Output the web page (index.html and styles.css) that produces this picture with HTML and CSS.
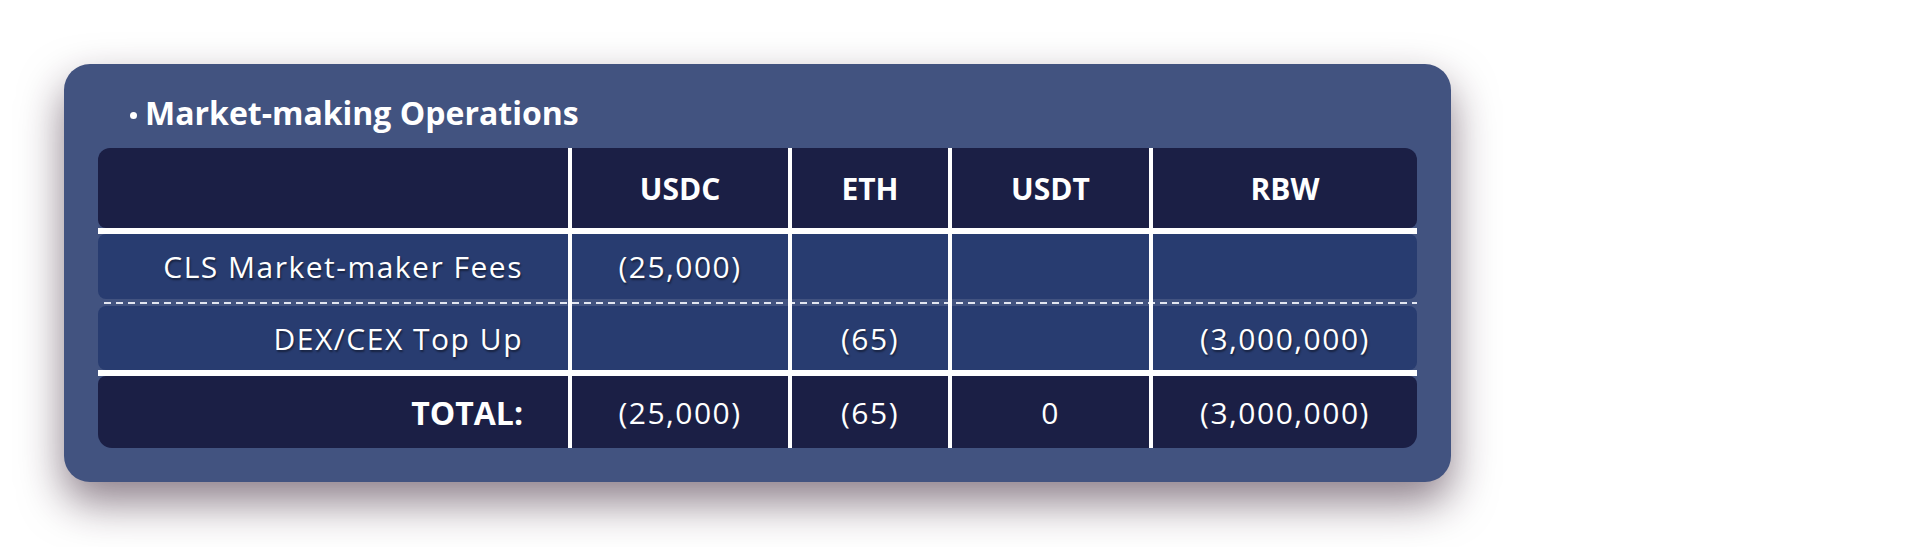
FILE: index.html
```html
<!DOCTYPE html>
<html lang="en">
<head>
<meta charset="utf-8">
<title>Market-making Operations</title>
<link rel="stylesheet" href="styles.css">
</head>
<body>
<main class="page">
  <section class="card">
    <h2 class="title"><span class="dot"></span>Market-making Operations</h2>
    <div class="table">
      <div class="row head">
        <div class="cell label"></div>
        <div class="cell">USDC</div>
        <div class="cell">ETH</div>
        <div class="cell">USDT</div>
        <div class="cell">RBW</div>
      </div>
      <div class="rule"></div>
      <div class="row body first">
        <div class="cell label">CLS Market-maker Fees</div>
        <div class="cell">(25,000)</div>
        <div class="cell"></div>
        <div class="cell"></div>
        <div class="cell"></div>
      </div>
      <div class="row gap">
        <div class="cell label"></div>
        <div class="cell"></div>
        <div class="cell"></div>
        <div class="cell"></div>
        <div class="cell"></div>
      </div>
      <div class="row body second">
        <div class="cell label">DEX/CEX Top Up</div>
        <div class="cell"></div>
        <div class="cell">(65)</div>
        <div class="cell"></div>
        <div class="cell">(3,000,000)</div>
      </div>
      <div class="rule"></div>
      <div class="row total">
        <div class="cell label">TOTAL:</div>
        <div class="cell">(25,000)</div>
        <div class="cell">(65)</div>
        <div class="cell">0</div>
        <div class="cell">(3,000,000)</div>
      </div>
    </div>
  </section>
</main>
</body>
</html>
```

FILE: styles.css
```css
* {
  box-sizing: border-box;
}

html, body {
  margin: 0;
  background: #ffffff;
}

body {
  font-family: "Open Sans", "Liberation Sans", sans-serif;
  color: #ffffff;
}

.page {
  min-height: 547px;
  padding: 64px 0 65px 64px;
}

.card {
  width: 1387px;
  background: #425380;
  border-radius: 26px;
  padding: 29px 34px 34px 34px;
  box-shadow: 0 20px 44px rgba(45, 20, 40, 0.55);
}

.title {
  margin: 0 0 15px 0;
  padding-left: 32px;
  height: 40px;
  line-height: 40px;
  font-size: 32px;
  font-weight: 700;
  display: flex;
  align-items: center;
}

.dot {
  width: 7px;
  height: 7px;
  border-radius: 50%;
  background: #ffffff;
  margin-right: 8px;
  margin-top: 4px;
  flex: none;
}

.table {
  display: flex;
  flex-direction: column;
}

.row {
  display: grid;
  grid-template-columns: 470px 220px 160px 201px 1fr;
}

.cell {
  display: flex;
  align-items: center;
  justify-content: center;
  border-left: 4px solid #ffffff;
}

.cell.label {
  border-left: none;
  justify-content: flex-end;
  padding-right: 45px;
}

.head {
  height: 80px;
  background: #1b1f45;
  border-radius: 12px 12px 8px 8px;
  font-size: 30px;
  font-weight: 700;
}

.rule {
  height: 6px;
  background: #ffffff;
}

.body {
  background: #283c70;
  border-radius: 8px;
  font-size: 30px;
  font-weight: 500;
  letter-spacing: 1.5px;
  text-shadow: 1px 2px 2px rgba(0, 0, 0, 0.45);
}

.body.first {
  height: 65px;
}

.body.second {
  height: 64px;
}

.gap {
  height: 7px;
  background-image: repeating-linear-gradient(to right, rgba(235, 238, 247, 0.95) 0 7px, transparent 7px 12px);
  background-size: 100% 2px;
  background-position: 6px 3px;
  background-repeat: no-repeat;
}

.total {
  height: 72px;
  background: #1b1f45;
  border-radius: 8px 8px 14px 14px;
  font-size: 30px;
  font-weight: 500;
  letter-spacing: 1.5px;
}

.total .label {
  font-size: 32px;
  font-weight: 700;
  letter-spacing: 0;
}
```
